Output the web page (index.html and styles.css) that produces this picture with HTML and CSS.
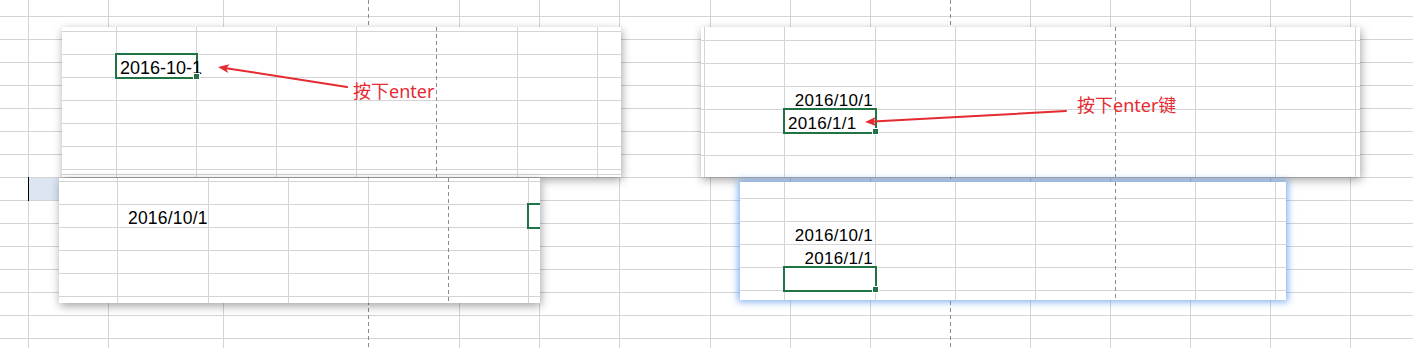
FILE: index.html
```html
<!DOCTYPE html>
<html lang="zh-CN">
<head>
<meta charset="utf-8">
<title>Excel 日期输入</title>
<link rel="stylesheet" href="styles.css">
</head>
<body>
<div class="desk">
  <section class="win win-a">
    <div class="sel sel-a"><span class="val">2016-10-1</span><span class="caret"></span><i class="handle"></i></div>
    <svg class="ann" viewBox="0 0 559 150" width="559" height="150">
      <line x1="164" y1="41.2" x2="285" y2="60" class="shaft"/>
      <polygon points="156,40 167.6,37.2 164.2,41.3 166.2,46.1" class="head"/>
    </svg>
    <span class="note note-a">按下enter</span>
  </section>

  <section class="win win-c">
    <div class="cell c-num">2016/10/1</div>
    <div class="sel sel-c"></div>
  </section>

  <section class="win win-b">
    <div class="cell cell-right b-num">2016/10/1</div>
    <div class="sel sel-b"><span class="val">2016/1/1</span><i class="handle"></i></div>
    <svg class="ann" viewBox="0 0 659 150" width="659" height="150">
      <line x1="172" y1="94.6" x2="365" y2="84" class="shaft"/>
      <polygon points="164,95 174.8,89.9 172.2,94.6 175.3,98.9" class="head"/>
    </svg>
    <span class="note note-b">按下enter键</span>
  </section>

  <section class="win win-d">
    <div class="cell cell-right d-num1">2016/10/1</div>
    <div class="cell cell-right d-num2">2016/1/1</div>
    <div class="sel sel-d"><i class="handle"></i></div>
  </section>
</div>
</body>
</html>
```

FILE: styles.css
```css
* { box-sizing: border-box; }

html, body {
  margin: 0;
  background: #fff;
}

body {
  font-family: "Liberation Sans", Arial, sans-serif;
  color: #000;
}

.desk {
  --ln: linear-gradient(#d4d4d4, #d4d4d4);
  --ds: repeating-linear-gradient(to bottom, #8c8c8c 0 4px, transparent 4px 7px);
  position: relative;
  width: 1413px;
  height: 348px;
  overflow: hidden;
  background-color: #fff;
  background-repeat: no-repeat;
  background-image:
    linear-gradient(#000, #000),
    linear-gradient(#dce6f2, #dce6f2),
    var(--ds), var(--ds),
    var(--ln), var(--ln), var(--ln), var(--ln), var(--ln), var(--ln), var(--ln),
    var(--ln), var(--ln), var(--ln), var(--ln), var(--ln), var(--ln), var(--ln),
    repeating-linear-gradient(to bottom, #d4d4d4 16px 17px, transparent 17px 39px);
  background-size:
    1px 24px, 40px 22px,
    1px 100%, 1px 100%,
    1px 100%, 1px 100%, 1px 100%, 1px 100%, 1px 100%, 1px 100%, 1px 100%,
    1px 100%, 1px 100%, 1px 100%, 1px 100%, 1px 100%, 1px 100%, 1px 100%,
    100% 100%;
  background-position:
    28px 177px, 29px 178px,
    368px 0, 950px 0,
    28px 0, 108px 0, 223px 0, 459px 0, 539px 0, 619px 0, 710px 0,
    790px 0, 870px 0, 1030px 0, 1110px 0, 1190px 0, 1270px 0, 1350px 0,
    0 0;
}

/* floating sheet screenshots */
.win {
  position: absolute;
  display: grid;
  overflow: hidden;
  background-color: #fff;
  background-repeat: no-repeat;
  box-shadow: 1px 3px 9px rgba(0, 0, 0, 0.36);
}

.win-a {
  left: 62px;
  top: 27px;
  width: 559px;
  height: 150px;
  z-index: 1;
  grid-template-columns: 54px 80px 1fr;
  grid-template-rows: 27px 23px 1fr;
  background-image:
    var(--ds),
    var(--ln), var(--ln), var(--ln), var(--ln), var(--ln), var(--ln),
    var(--ln),
    repeating-linear-gradient(to bottom, #d4d4d4 4px 5px, transparent 5px 27px);
  background-size:
    1px 100%,
    1px 100%, 1px 100%, 1px 100%, 1px 100%, 1px 100%, 1px 100%,
    100% 1px,
    100% 100%;
  background-position:
    374px 0,
    54px 0, 134px 0, 214px 0, 294px 0, 455px 0, 535px 0,
    0 147px,
    0 0;
}

.win-b {
  left: 701px;
  top: 27px;
  width: 659px;
  height: 150px;
  z-index: 1;
  grid-template-columns: 83px 91px 1fr;
  grid-template-rows: 59px 23px 23px 1fr;
  background-image:
    var(--ds),
    var(--ln), var(--ln), var(--ln), var(--ln), var(--ln), var(--ln), var(--ln), var(--ln),
    repeating-linear-gradient(to bottom, #d4d4d4 13px 14px, transparent 14px 36px);
  background-size:
    1px 100%,
    1px 100%, 1px 100%, 1px 100%, 1px 100%, 1px 100%, 1px 100%, 1px 100%, 1px 100%,
    100% 100%;
  background-position:
    414px 0,
    3px 0, 83px 0, 174px 0, 254px 0, 334px 0, 494px 0, 574px 0, 654px 0,
    0 0;
}

.win-c {
  left: 59px;
  top: 178px;
  width: 481px;
  height: 125px;
  z-index: 2;
  grid-template-columns: 58px 91px 320px 1fr;
  grid-template-rows: 26px 23px 1fr;
  background-image:
    var(--ds),
    var(--ln), var(--ln), var(--ln), var(--ln), var(--ln),
    repeating-linear-gradient(to bottom, #d4d4d4 3px 4px, transparent 4px 26px);
  background-size:
    1px 100%,
    1px 100%, 1px 100%, 1px 100%, 1px 100%, 1px 100%,
    100% 100%;
  background-position:
    389px 0,
    58px 0, 149px 0, 229px 0, 309px 0, 469px 0,
    0 0;
}

.win-d {
  left: 740px;
  top: 182px;
  width: 546px;
  height: 118px;
  z-index: 2;
  grid-template-columns: 44px 91px 1fr;
  grid-template-rows: 39px 23px 23px 23px 1fr;
  box-shadow: 0 0 7px 2px rgba(80, 145, 235, 0.7);
  background-image:
    var(--ds),
    var(--ln), var(--ln), var(--ln), var(--ln), var(--ln), var(--ln),
    repeating-linear-gradient(to bottom, #d4d4d4 16px 17px, transparent 17px 39px);
  background-size:
    1px 100%,
    1px 100%, 1px 100%, 1px 100%, 1px 100%, 1px 100%, 1px 100%,
    100% 100%;
  background-position:
    375px 0,
    44px 0, 135px 0, 215px 0, 295px 0, 455px 0, 535px 0,
    0 0;
}

/* cells */
.cell {
  display: flex;
  align-items: flex-end;
  white-space: nowrap;
  line-height: 1;
  font-size: 17px;
  letter-spacing: 0.3px;
}

.cell-right {
  justify-content: flex-end;
  padding-right: 2px;
}

.b-num { grid-area: 2 / 2; }
.d-num1 { grid-area: 2 / 2; }
.d-num2 { grid-area: 3 / 2; }

.c-num {
  grid-area: 2 / 2;
  padding-left: 11px;
  font-size: 17.5px;
  letter-spacing: 0.2px;
}

/* active cell */
.sel {
  position: relative;
  display: flex;
  align-items: flex-end;
  margin: -1px -2px -2px -1px;
  padding-left: 3px;
  border: 2px solid #217346;
  white-space: nowrap;
  line-height: 1;
}

.sel-a {
  grid-area: 2 / 2;
  font-size: 18px;
}

.sel-b {
  grid-area: 3 / 2;
  font-size: 17px;
  letter-spacing: 0.3px;
}

.sel-c {
  grid-area: 2 / 4;
  width: 94px;
  justify-self: start;
}

.sel-d { grid-area: 4 / 2; }

.caret {
  display: inline-block;
  width: 1px;
  height: 20px;
  margin: 0 0 1px -1px;
  background: #000;
}

.handle {
  position: absolute;
  right: -3px;
  bottom: -2px;
  width: 5px;
  height: 5px;
  background: #217346;
  box-shadow: 0 0 0 1px #fff;
}

/* annotations */
.ann {
  position: absolute;
  left: 0;
  top: 0;
  pointer-events: none;
}

.shaft {
  stroke: #e52a30;
  stroke-width: 2;
  stroke-linecap: round;
}

.head { fill: #e52a30; }

.note {
  position: absolute;
  font-family: "Noto Sans", "Noto Sans CJK SC", sans-serif;
  font-size: 18px;
  line-height: 20px;
  color: #e52a30;
  white-space: nowrap;
}

.note-a { left: 291px; top: 54px; }
.note-b { left: 376px; top: 68px; }
```
